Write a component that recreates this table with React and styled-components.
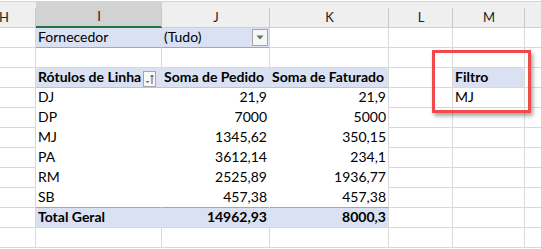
import React from "react";
import styled, { createGlobalStyle, css } from "styled-components";

const GlobalStyle = createGlobalStyle`
  html, body { margin: 0; padding: 0; background: #fff; overflow: hidden; }
  body { font-family: Lato, "Liberation Sans", sans-serif; color: #000; }
`;

const GRID = "#d9d9d9";
const BLUE_FILL = "#d9e1f2";
const BLUE_LINE = "#8ea9db";
const COLS = "64px 126px 108px 119px 64px 72px 100px";

const Sheet = styled.div`
  position: relative;
  width: 541px;
  height: 249px;
  overflow: hidden;
  background: #fff;
`;

const Grid = styled.div`
  margin-left: -28px;
  width: 653px;
`;

const HeaderRow = styled.div`
  display: grid;
  grid-template-columns: ${COLS};
  margin-top: 1px;
  border-top: 1px solid #d4d4d4;
`;

const ColHead = styled.div`
  position: relative;
  height: 26px;
  box-sizing: border-box;
  background: ${(p) => (p.$selected ? "#d2d2d2" : "#efefef")};
  border-bottom: ${(p) => (p.$selected ? "2px solid #217346" : "1px solid #d0d0d0")};
  display: flex;
  align-items: flex-end;
  justify-content: center;
  padding-bottom: 2px;
  font-size: 13px;
  color: #222;
  &::after {
    content: "";
    position: absolute;
    right: 0;
    top: 6px;
    bottom: -1px;
    width: 1px;
    background: #c8c8c8;
  }
`;

const Row = styled.div`
  display: grid;
  grid-template-columns: ${COLS};
  height: 20px;
`;

const Cell = styled.div`
  position: relative;
  box-sizing: border-box;
  height: 20px;
  display: flex;
  align-items: flex-end;
  padding: 0 2px 3px 2px;
  font-size: 14px;
  line-height: 14px;
  white-space: nowrap;
  justify-content: ${(p) => (p.$right ? "flex-end" : "flex-start")};
  font-weight: ${(p) => (p.$bold ? 700 : 400)};
  background: ${(p) => (p.$fill ? BLUE_FILL : "transparent")};
  border-right: 1px solid ${(p) => (p.$joinRight ? "transparent" : GRID)};
  border-bottom: 1px solid
    ${(p) => (p.$bottom ? p.$bottom : p.$noBottom ? "transparent" : GRID)};
  ${(p) =>
    p.$fill &&
    p.$joinRight &&
    css`
      border-right-color: ${BLUE_FILL};
    `}
`;

const DropButton = styled.div`
  position: absolute;
  right: 1px;
  top: 1px;
  width: 16px;
  height: 17px;
  box-sizing: border-box;
  border: 1px solid #a6a6a6;
  background: #f6f6f6;
  display: flex;
  align-items: center;
  justify-content: center;
`;

const SortButton = styled.div`
  position: absolute;
  right: 5px;
  top: 3px;
  width: 13px;
  height: 16px;
  box-sizing: border-box;
  border: 1px solid #a6a6a6;
  background: #f8f8f8;
  display: flex;
  align-items: center;
  justify-content: center;
`;

const Callout = styled.div`
  position: absolute;
  left: 432px;
  top: 50px;
  width: 99px;
  height: 63px;
  box-sizing: border-box;
  border: 3px solid #f24a4a;
  box-shadow: 2px 3px 4px rgba(0, 0, 0, 0.35);
  pointer-events: none;
`;

const DownArrow = () => (
  <svg width="8" height="5" viewBox="0 0 8 5">
    <path d="M0.5 0.5 L7.5 0.5 L4 4.5 Z" fill="#6b6b6b" />
  </svg>
);

const SortIcon = () => (
  <svg width="11" height="14" viewBox="0 0 11 14">
    <path d="M1.5 9 L5.5 9 L3.5 11 Z" fill="#6b6b6b" />
    <path d="M8 3 L8 12" stroke="#555" strokeWidth="1" />
    <path d="M6.5 5 L8 3 L9.5 5" stroke="#555" strokeWidth="1" fill="none" />
  </svg>
);

// the last column runs past the window edge, so its letter stays out of view
const letters = ["H", "I", "J", "K", "L", "M", ""];

const data = [
  ["DJ", "21,9", "21,9"],
  ["DP", "7000", "5000"],
  ["MJ", "1345,62", "350,15"],
  ["PA", "3612,14", "234,1"],
  ["RM", "2525,89", "1936,77"],
  ["SB", "457,38", "457,38"],
];

const Plain = () => <Cell />;

export default function App() {
  return (
    <Sheet>
      <GlobalStyle />
      <Grid>
        <HeaderRow>
          {letters.map((l, i) => (
            <ColHead key={i} $selected={l === "I"}>
              {l}
            </ColHead>
          ))}
        </HeaderRow>

        {/* report filter */}
        <Row>
          <Plain />
          <Cell $fill $joinRight $bottom={BLUE_LINE}>Fornecedor</Cell>
          <Cell $fill $bottom={BLUE_LINE}>
            (Tudo)
            <DropButton>
              <DownArrow />
            </DropButton>
          </Cell>
          <Plain />
          <Plain />
          <Plain />
          <Plain />
        </Row>

        <Row>
          <Plain />
          <Plain />
          <Plain />
          <Plain />
          <Plain />
          <Plain />
          <Plain />
        </Row>

        {/* pivot header */}
        <Row>
          <Plain />
          <Cell $fill $bold $joinRight $bottom="#b4c6e7">
            Rótulos de Linha
            <SortButton>
              <SortIcon />
            </SortButton>
          </Cell>
          <Cell $fill $bold $joinRight $bottom="#b4c6e7">Soma de Pedido</Cell>
          <Cell $fill $bold $bottom="#b4c6e7">Soma de Faturado</Cell>
          <Plain />
          <Cell $fill $bold>Filtro</Cell>
          <Plain />
        </Row>

        {data.map(([label, pedido, faturado], i) => {
          const last = i === data.length - 1;
          const edge = last ? { $bottom: BLUE_LINE } : { $noBottom: true };
          return (
            <Row key={label}>
              <Plain />
              <Cell $joinRight {...edge}>{label}</Cell>
              <Cell $joinRight $right {...edge}>{pedido}</Cell>
              <Cell $right {...edge}>{faturado}</Cell>
              <Plain />
              <Cell>{i === 0 ? "MJ" : ""}</Cell>
              <Plain />
            </Row>
          );
        })}

        <Row>
          <Plain />
          <Cell $fill $bold $joinRight>Total Geral</Cell>
          <Cell $fill $bold $joinRight $right>14962,93</Cell>
          <Cell $fill $bold $right>8000,3</Cell>
          <Plain />
          <Plain />
          <Plain />
        </Row>

        <Row>
          <Plain />
          <Plain />
          <Plain />
          <Plain />
          <Plain />
          <Plain />
          <Plain />
        </Row>
      </Grid>
      <Callout />
    </Sheet>
  );
}
